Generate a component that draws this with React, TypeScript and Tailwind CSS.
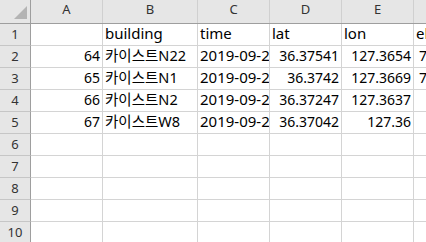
import React from "react";

const FONT = '"Noto Sans", "Noto Sans CJK KR", sans-serif';

type Cell = { t: string; right?: boolean; pad?: string; size?: string };

const widths = ["w-[72px]", "w-[95px]", "w-[72px]", "w-[72px]", "w-[72px]", "w-[72px]"];
const letters = ["A", "B", "C", "D", "E", "F"];

const H = (t: string): Cell => ({ t, size: "text-[15px]" });
const K = (t: string): Cell => ({ t, size: "text-[14.5px]" });
const D = (t: string): Cell => ({ t, size: "text-[15px]" });
const R = (t: string): Cell => ({ t, right: true });
const E: Cell = { t: "" };

const rows: Cell[][] = [
  [E, H("building"), H("time"), H("lat"), H("lon"), H("el")],
  [R("64"), K("카이스트N22"), D("2019-09-20 11:00"), R("36.37541"), R("127.3654"), { t: "7", pad: "pl-[5px]" }],
  [R("65"), K("카이스트N1"), D("2019-09-20 11:00"), R("36.3742"), R("127.3669"), { t: "7", pad: "pl-[5px]" }],
  [R("66"), K("카이스트N2"), D("2019-09-20 11:00"), R("36.37247"), R("127.3637"), E],
  [R("67"), K("카이스트W8"), D("2019-09-20 11:00"), R("36.37042"), R("127.36"), E],
  [E, E, E, E, E, E],
  [E, E, E, E, E, E],
  [E, E, E, E, E, E],
  [E, E, E, E, E, E],
  [E, E, E, E, E, E],
];

export default function App() {
  return (
    <div
      className="w-[426px] h-[242px] overflow-hidden bg-white"
      style={{ fontFamily: FONT }}
    >
      <div className="w-max">
        {/* column header */}
        <div className="flex h-[24px] bg-[#e6e6e6] border-b border-[#9e9e9e]">
          <div className="relative w-[31px] shrink-0 border-r border-[#9e9e9e]">
            <svg className="absolute left-0 top-0" width="30" height="23" viewBox="0 0 30 23">
              <polygon points="27,6 27,19 14,19" fill="#b4b4b4" />
            </svg>
          </div>
          {letters.map((l, i) => (
            <div
              key={l}
              className={`${widths[i]} shrink-0 border-r border-[#d0d0d0] flex items-center justify-center pb-[3px] text-[13px] text-[#333333]`}
            >
              {l}
            </div>
          ))}
        </div>
        {rows.map((r, ri) => (
          <div key={ri} className="flex h-[22px]">
            <div className="w-[31px] shrink-0 bg-[#e6e6e6] border-r border-b border-r-[#9e9e9e] border-b-[#c6c6c6] flex items-center justify-center text-[13px] text-[#333333]">
              {ri + 1}
            </div>
            {r.map((c, ci) => (
              <div
                key={ci}
                className={`${widths[ci]} shrink-0 overflow-hidden whitespace-nowrap border-r border-b border-[#d4d4d4] flex items-center leading-[19px] pb-[2px] text-black ${
                  c.size ? c.size : "text-[14px]"
                } ${c.right ? "justify-end pr-[2px]" : c.pad ? c.pad : "pl-[2px]"}`}
              >
                {c.t}
              </div>
            ))}
          </div>
        ))}
      </div>
    </div>
  );
}
